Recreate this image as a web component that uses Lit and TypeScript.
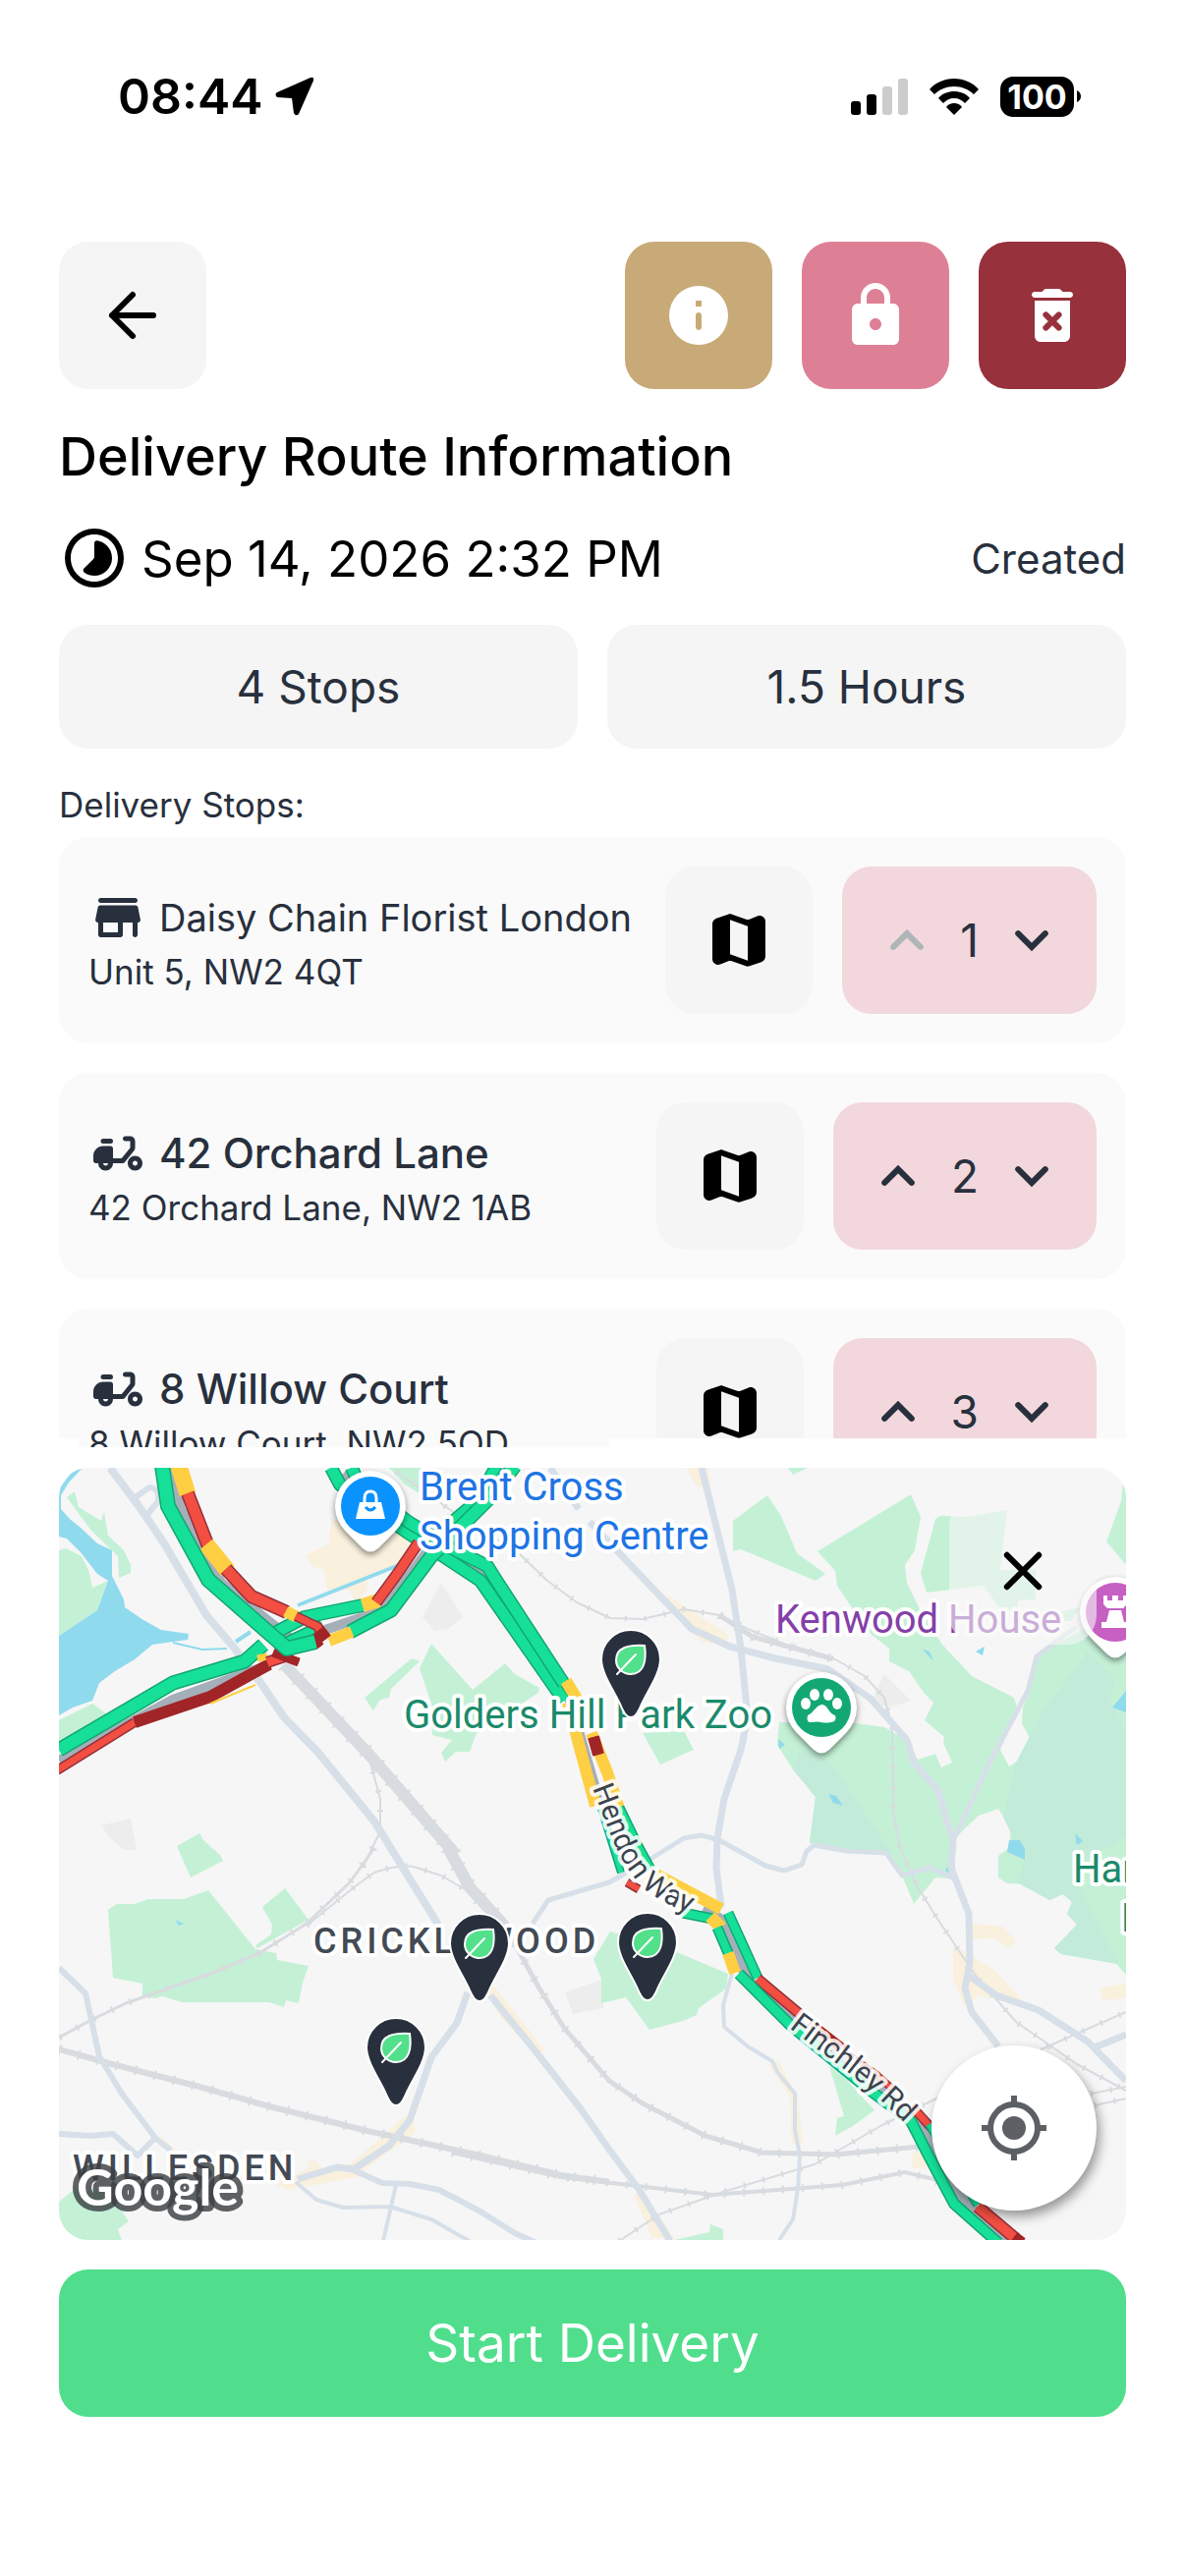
import { LitElement, html, css, svg } from 'lit';
import { customElement, property, state } from 'lit/decorators.js';

interface Stop {
  name: string;
  address: string;
  kind: 'store' | 'scooter';
}

const icons = {
  back: svg`<path d="M19 12H5M12 5l-7 7 7 7" fill="none" stroke="currentColor" stroke-width="2" stroke-linecap="round" stroke-linejoin="round"/>`,
  info: svg`<path d="M12 2a10 10 0 1 0 0 20 10 10 0 0 0 0-20zm0 15c-.55 0-1-.45-1-1v-4c0-.55.45-1 1-1s1 .45 1 1v4c0 .55-.45 1-1 1zm1-8h-2V7h2v2z"/>`,
  lock: svg`<path d="M18 8h-1V6c0-2.76-2.24-5-5-5S7 3.24 7 6v2H6c-1.1 0-2 .9-2 2v10c0 1.1.9 2 2 2h12c1.1 0 2-.9 2-2V10c0-1.1-.9-2-2-2zm-6 9c-1.1 0-2-.9-2-2s.9-2 2-2 2 .9 2 2-.9 2-2 2zM9 8V6c0-1.66 1.34-3 3-3s3 1.34 3 3v2H9z"/>`,
  remove: svg`<path d="M6 7v12c0 1.1.9 2 2 2h8c1.1 0 2-.9 2-2V7H6zM18 4h-2.5l-.71-.71c-.18-.18-.44-.29-.7-.29H9.91c-.26 0-.52.11-.7.29L8.5 4H6c-.55 0-1 .45-1 1s.45 1 1 1h12c.55 0 1-.45 1-1s-.45-1-1-1z"/><path d="M9.8 11.8l4.4 4.4M14.2 11.8l-4.4 4.4" stroke="#97313c" stroke-width="2" stroke-linecap="round"/>`,
  timelapse: svg`<path d="M16.24 7.75A5.97 5.97 0 0 0 13 6.1c-.55-.1-1 .35-1 .9v4.6c0 .26-.1.5-.3.7l-3.2 3.2c-.4.4-.36 1.06.1 1.4 2.34 1.7 5.6 1.4 7.65-.67a5.99 5.99 0 0 0-.01-8.48zM12 2a10 10 0 1 0 0 20 10 10 0 0 0 0-20zm0 18c-4.42 0-8-3.58-8-8s3.58-8 8-8 8 3.58 8 8-3.58 8-8 8z"/>`,
  store: svg`<path d="M5 6h14c.55 0 1-.45 1-1s-.45-1-1-1H5c-.55 0-1 .45-1 1s.45 1 1 1zm15.16 1.8c-.09-.46-.5-.8-.98-.8H4.82c-.48 0-.89.34-.98.8l-1 5c-.12.62.35 1.2.98 1.2H4v5c0 .55.45 1 1 1h8c.55 0 1-.45 1-1v-5h4v5c0 .55.45 1 1 1s1-.45 1-1v-5h.18c.63 0 1.1-.58.98-1.2l-1-5zM12 18H6v-4h6v4z"/>`,
  scooter: svg`<path d="M19 7c0-1.1-.9-2-2-2h-2c-.55 0-1 .45-1 1s.45 1 1 1h2v2.65L13.52 14H10v-4c0-.55-.45-1-1-1H6c-2.21 0-4 1.79-4 4v2c0 .55.45 1 1 1h1c0 1.66 1.34 3 3 3s3-1.34 3-3h4c.3 0 .59-.14.78-.38l3.78-4.72c.28-.35.44-.8.44-1.25V7zM7 17c-.55 0-1-.45-1-1h2c0 .55-.45 1-1 1zM9 6H6a1 1 0 0 0 0 2h3a1 1 0 0 0 0-2zM19 13c-1.66 0-3 1.34-3 3s1.34 3 3 3 3-1.34 3-3-1.34-3-3-3zm0 4c-.55 0-1-.45-1-1s.45-1 1-1 1 .45 1 1-.45 1-1 1z"/>`,
  map: svg`<path d="M14.65 4.98l-5-1.75c-.42-.15-.88-.15-1.3-.01L4.36 4.56C3.55 4.84 3 5.6 3 6.46v11.85c0 1.41 1.41 2.37 2.72 1.86l2.93-1.14c.22-.09.47-.09.69-.01l5 1.75c.42.15.88.15 1.3.01l3.99-1.34c.81-.27 1.36-1.04 1.36-1.9V5.69c0-1.41-1.41-2.37-2.72-1.86l-2.93 1.14c-.22.08-.46.09-.69.01zM15 18.89l-6-2.11V5.11l6 2.11v11.67z"/>`,
  up: svg`<path d="M7.4 14.3L12 9.7l4.6 4.6" fill="none" stroke="currentColor" stroke-width="2" stroke-linecap="round" stroke-linejoin="miter"/>`,
  down: svg`<path d="M7.4 9.7l4.6 4.6 4.6-4.6" fill="none" stroke="currentColor" stroke-width="2" stroke-linecap="round" stroke-linejoin="miter"/>`,
  close: svg`<path d="M6.6 6.6l10.8 10.8M17.4 6.6L6.6 17.4" stroke="currentColor" stroke-width="2" stroke-linecap="round"/>`,
  locate: svg`<circle cx="12" cy="12" r="4"/><circle cx="12" cy="12" r="8" fill="none" stroke="currentColor" stroke-width="2"/><path d="M12 1v3M12 20v3M1 12h3M20 12h3" stroke="currentColor" stroke-width="2"/>`,
};

const icon = (name: keyof typeof icons, size = '') =>
  html`<svg class="icon ${size}" viewBox="0 0 24 24" aria-hidden="true">${icons[name]}</svg>`;

const iconStyles = css`
  .icon {
    display: block;
    flex: none;
    width: 72px;
    height: 72px;
    fill: currentColor;
  }
  .icon.small {
    width: 60px;
    height: 60px;
  }
  button {
    font: inherit;
    color: inherit;
    border: 0;
    padding: 0;
    margin: 0;
    background: none;
    cursor: pointer;
  }
`;

/* Base map shapes, in map units */
const parks = [
  'M8 30L16 24 20 40 43 54 46 45 50 69 66 84 73 99V107L61 112 60 90 36 67 29 59Z',
  'M0 84L7 82 23 90 30 104 34 122 50 115 39 145 0 171Z',
  'M0 257L34 240 48 250 30 262 0 280Z',
  'M379 179L421 226 454 199 464 210 489 224 488 229 425 270 418 289 404 289 393 299 389 290 400 277 380 272 379 240 367 204Z',
  'M359 194L367 197 338 225 336 234 327 236 320 247 311 234Z',
  'M120 385L143 372 147 379 164 394 167 400 134 417Z',
  'M336 0H370V28L352 17Z',
  'M721 28L735 49 751 87 780 108 770 115 694 83 686 85V54Z',
  'M867 27L877 50 871 84 861 99 863 117 876 144 899 180 929 212 972 234 976 247 958 287 967 304 981 295 989 277 980 260 981 244 988 227 995 192 1019 177 1054 158 1086 160V516L1076 505 1020 495 1013 489 1036 465 1026 454 1031 442 1022 434 1008 440 983 424 965 423 956 417V395L967 387 969 367 956 347 936 354 920 369 910 380 913 419 892 417 870 444 858 415 842 392 801 390 769 384 764 380 770 335 747 307 731 282 733 259 811 260 840 264 863 277 874 297 892 291 898 305 909 300 900 280 901 274 881 257 890 239 881 230 865 207 845 197V184L826 169 808 144 792 120 790 105 772 85Z',
  'M897 49L924 50 965 43 958 104 994 103V134L976 135 975 147 990 152 1040 142 1030 156 975 156 960 147 941 120 883 127 877 107 892 52Z',
  'M1083 15L1081 34 1066 75 1086 99V15Z',
  'M742 0H762L747 7Z',
  'M594 270L636 268 646 287 612 302Z',
  'M50 450L59 444 77 444 91 439 127 439 152 430 200 490 221 494 222 501 254 507 248 524 244 545 231 542 229 549 214 544 125 544 105 538 98 540 85 537V525L55 519Z',
  'M230 428L254 460 202 489 200 486 216 475 217 465 207 447Z',
  'M0 747L16 734 50 735 71 767 60 775 64 787H0Z',
  'M544 500L561 472 631 494 681 515 679 530 651 550 649 557 635 563 601 572 577 539 552 545V520Z',
  'M784 609L799 620 830 654 808 670 790 680 792 662 799 660Z',
  'M663 770L676 775V786H626L662 778Z',
];
const woods = [
  'M754 287L783 297 848 392 842 392 764 382 770 335 747 307Z',
  'M1047 187L1075 215 1069 234 1086 267V375L1029 410 1050 450 1079 505 1020 495 1013 489 1036 465 1026 454 1031 442 1022 434 1008 440 975 422 982 400 961 355 974 300 1000 250Z',
];
const waters = [
  'M16 0H24L10 15 2 28V42L12 53 21 60 39 77 54 84V110L66 134 67 142 86 155 104 165 132 169 131 175 116 177 95 180 77 195 57 207 41 219 34 237 14 244 0 252V171L39 145 50 115 39 108 22 86 8 72 0 70V22Z',
  'M879 185L890 197 886 187Z',
  'M933 187L942 182 940 191Z',
  'M1072 244L1086 227V249Z',
  'M783 332L791 334 798 344 788 341Z',
  'M967 379H978L983 388V399L965 391Z',
  'M1034 372L1042 380 1036 384Z',
  'M902 410L907 402V413Z',
  'M732 276L739 282 733 286Z',
  'M118 460L127 464 122 466Z',
];
const plots = [
  'M389 117L411 152 396 164 382 166 370 152Z',
  'M43 364L73 357 79 389 66 389 50 375Z',
  'M515 534L552 521 554 550 523 556Z',
  'M840 210L867 237 845 244 826 239Z',
];
const shops = [
  'M277 52L343 65 359 74 345 99 314 114V124L302 137 296 124H273L270 104 257 100 251 89 275 77Z',
  'M638 0H660L664 18 650 20Z',
  'M620 130L681 170 679 182 654 177 617 140Z',
  'M929 464L961 467 974 482 967 489 951 479 929 480Z',
  'M910 487L947 507 979 540 977 547 936 537 922 549 910 520Z',
  'M337 674L352 659 362 667V677L321 707 303 722 232 735 221 730 255 712 252 706 262 705 270 716 296 709Z',
  'M100 679L121 695 114 700Z',
  'M393 465L494 592 488 600 450 560Z',
  'M722 608L732 604 752 640 757 688H746L744 640Z',
  'M869 697H885L883 714 868 712Z',
  'M1060 529L1086 525V540L1062 542Z',
  'M585 740L592 736 626 784H604Z',
];
const streets: [string, number][] = [
  ['M52 0L82 40 107 77 150 150 179 184 204 217 229 254 264 290 321 360 350 407 386 465', 8],
  ['M75 32L92 20Q100 20 101 28V34L88 50', 6],
  ['M500 0L529 42M540 55L597 115 644 164 683 182 729 194 783 205 826 235 863 277 870 300 894 327 910 380 908 407 926 454 927 504 922 530 929 554 956 589', 7],
  ['M926 517L954 537 997 552 1047 584 1086 624M1086 577L1054 590', 7],
  ['M654 0L670 64 685 124 694 184 701 254 694 287 677 337 670 377 669 407 674 447', 7],
  ['M482 464L498 440 560 422 599 400 636 377 654 374 672 379 719 405 738 410 756 404 761 390 769 384 801 390 842 392 858 415 886 407 913 419', 5],
  ['M1035 162L995 192 986 227 974 250 947 300 910 380', 5],
  ['M685 515L676 547 677 569 701 589 726 604 731 615 749 637V674L754 700 752 734 747 765 733 786', 4],
  ['M0 509L27 535 41 599 64 637 98 682 114 695M0 678L32 680 55 678 80 700 98 682', 6],
  ['M416 534L405 565 379 600 357 664 336 690 300 714 283 712 243 724', 7],
  ['M300 715L329 728 357 729 387 735 429 757 464 779 486 789', 6],
  ['M241 727L262 745 289 753 337 752 379 765 421 789M343 730L330 787', 4],
  ['M439 537L482 590 532 654 560 694 590 734 622 787', 7],
];
const rails: [string, number][] = [
  ['M229 200L314 290 404 394', 12],
  ['M396 387L418 427 454 467', 12],
  ['M454 467L489 530 514 570 560 624 594 647 658 680 715 697 790 699 886 690', 5],
  ['M314 290L327 337V370L309 407', 2],
  ['M321 387L296 422 252 464 204 494 157 514 68 545 29 564 0 580', 3],
  ['M252 466L304 424 321 412Q345 404 361 406L389 415 418 432 436 450', 2],
  ['M0 592L54 607 143 630 214 650 314 675 429 700 511 720 560 727', 6],
  ['M400 697L511 722 597 732 665 740 797 730 861 717 890 724 910 736', 4],
  ['M570 787L611 760 676 737 769 709 836 670 897 640 1004 590 1086 554', 2],
  ['M343 4L400 44 468 87 496 114 527 137 561 153 594 154 636 144 672 150 701 164 740 180 790 195 820 212 840 234 848 264 849 350 856 387 874 427 894 459 933 517 974 564 1036 607 1086 634', 2],
  ['M672 150L706 172 786 194', 5],
  ['M1050 637L1086 630M1054 649L1086 642', 2],
];
const G = ['#16e098', '#11a672'];
const R = ['#f24e42', '#93303a'];
const D = ['#a12527', '#a12527'];
const Y = ['#ffcf43', '#ffcf43'];
const traffic: [string[], string, number][] = [
  [G, 'M277 0L286 17 355 66 382 84 429 115 514 237', 14],
  [G, 'M298 0L306 18 357 56 404 84 436 100 446 116 514 220', 14],
  [G, 'M445 -2L425 34 382 70', 13],
  [G, 'M464 -2L439 30 379 90 338 145 296 167', 15],
  [Y, 'M298 167L275 176', 12],
  [G, 'M220 168L250 152 309 140', 14],
  [Y, 'M309 140L325 135', 14],
  [R, 'M323 137L345 107 366 76', 12],
  [G, 'M230 178L268 160', 11],
  [G, 'M0 287L116 219 189 197 208 180', 15],
  [R, 'M-2 308L77 259', 10],
  [D, 'M77 259L154 233 214 200', 12],
  [Y, 'M154 240L200 221', 2],
  [Y, 'M202 194L212 192', 7],
  [R, 'M212 198L236 190', 12],
  [D, 'M218 188L244 198M258 172L266 182', 9],
  [Y, 'M122 -2L131 27', 17],
  [R, 'M131 26L152 80', 14],
  [Y, 'M150 78L172 105', 17],
  [R, 'M170 103L196 131 232 147', 14],
  [Y, 'M231 146L242 152', 12],
  [R, 'M241 151L264 162 267 174', 10],
  [D, 'M273 166L260 176', 12],
  [G, 'M105 -2L111 39 152 114 232 184 261 177', 16],
  [Y, 'M516 217L527 235', 12],
  [Y, 'M518 239L530 285 546 344', 12],
  [Y, 'M542 270L558 310 570 347', 12],
  [D, 'M544 274L549 292', 12],
  [G, 'M570 346L590 387 602 409', 11],
  [G, 'M552 347L572 412', 8],
  [R, 'M578 422L590 429', 9],
  [Y, 'M608 414L674 449', 12],
  [G, 'M635 453L665 459', 11],
  [Y, 'M663 457L674 468', 13],
  [G, 'M670 468L682 496', 11],
  [Y, 'M681 494L688 514', 12],
  [G, 'M681 453L711 519', 11],
  [R, 'M711 520L754 556', 11],
  [D, 'M764 565L800 593', 10],
  [D, 'M804 597L834 618', 6],
  [R, 'M832 618L848 632', 8],
  [R, 'M868 650L888 672', 10],
  [G, 'M886 668L935 750', 10],
  [R, 'M935 752L974 785', 13],
  [D, 'M972 783L980 789', 12],
  [G, 'M692 515L744 567 826 634 867 665 885 700 911 749 956 789', 12],
];
const medians =
  'M115 0L124 42 165 117 238 176M290 5L370 67 434 107 520 237 550 340M455 0L432 32 380 78 330 145 250 172 232 182M0 298L116 236 210 202M655 450L672 458 700 520 745 560 830 624 880 675 920 745 968 789';

const mapPins = [
  [582, 253],
  [428, 542],
  [343, 648],
  [599, 541],
];

const poi = (x: number, y: number, color: string, glyph: unknown) => svg`
  <g transform="translate(${x} ${y})" class="poi">
    <path d="M-25 26L-8 43Q0 50 8 43L25 26A36 36 0 1 0 -25 26Z" fill="#fff"/>
    <circle r="30" fill=${color}/>
    ${glyph}
  </g>
`;

@customElement('route-map')
export class RouteMap extends LitElement {
  static styles = [
    iconStyles,
    css`
      :host {
        display: block;
        position: relative;
        overflow: hidden;
        border-radius: 30px;
        background: #f6f6f6;
        aspect-ratio: 181 / 131;
        font-family: Roboto, 'Liberation Sans', sans-serif;
      }
      .canvas {
        display: block;
        width: 100%;
        height: 100%;
      }
      .line {
        fill: none;
        stroke-linejoin: round;
      }
      .poi {
        filter: drop-shadow(0 3px 3px rgba(0, 0, 0, 0.45));
      }
      .label {
        font-size: 40px;
        paint-order: stroke;
        stroke: #fff;
        stroke-width: 8px;
        stroke-linejoin: round;
      }
      .area {
        font-size: 36px;
        letter-spacing: 4px;
        font-weight: 500;
        fill: #434a54;
      }
      .street {
        font-size: 30px;
        fill: #3c434e;
        stroke: rgba(255, 255, 255, 0.85);
      }
      .shop {
        fill: #1e74e4;
      }
      .zoo {
        fill: #1b8a6b;
      }
      .house {
        fill: #8440a8;
      }
      .brand {
        font-family: Lato, 'Open Sans', sans-serif;
        font-size: 52px;
        font-weight: 700;
        fill: #fff;
        paint-order: stroke;
        stroke: rgba(60, 64, 67, 0.82);
        stroke-width: 12px;
        stroke-linejoin: round;
      }
      .close,
      .locate {
        position: absolute;
        right: 30px;
        display: grid;
        place-items: center;
      }
      .close {
        top: 30px;
        width: 150px;
        height: 150px;
        border-radius: 30px;
        background: rgba(246, 246, 246, 0.6);
        color: #000;
      }
      .locate {
        bottom: 30px;
        width: 168px;
        height: 168px;
        border-radius: 50%;
        background: #fff;
        color: #5c5f64;
        box-shadow: 3px 6px 12px rgba(0, 0, 0, 0.4);
      }
    `,
  ];

  render() {
    return html`
      <svg class="canvas" viewBox="0 0 1086 786" preserveAspectRatio="xMidYMid slice" role="img" aria-label="Route map">
        ${shops.map((d) => svg`<path d=${d} fill="#f9f0de"/>`)}
        ${plots.map((d) => svg`<path d=${d} fill="#ecedec"/>`)}
        ${parks.map((d) => svg`<path d=${d} fill="#c4f1d6"/>`)}
        ${woods.map((d) => svg`<path d=${d} fill="#c2ebd9"/>`)}
        ${waters.map((d) => svg`<path d=${d} fill="#90daee"/>`)}
        <path class="line" stroke="#90daee" stroke-width="4" d="M180 177L195 167M243 140L346 99" />
        <path class="line" stroke="#90daee" stroke-width="2" d="M116 178L146 185 171 184" />
        ${rails.map(([d, w]) => svg`<path class="line" stroke="#d8dbdf" stroke-width=${w} d=${d}/>`)}
        ${rails.map(([d, w]) => svg`<path class="line" stroke="#d8dbdf" stroke-width=${w + 4} stroke-dasharray="2 18" d=${d}/>`)}
        ${streets.map(([d, w]) => svg`<path class="line" stroke="#d7e0e8" stroke-width=${w} d=${d}/>`)}
        <path class="line" stroke="#a5afb9" stroke-width="10" d=${medians} />
        ${traffic.map(
          ([c, d, w]) => svg`
            <path class="line" stroke=${c[1]} stroke-width=${w} d=${d}/>
            <path class="line" stroke=${c[0]} stroke-width=${w - 3} d=${d}/>
          `
        )}

        ${poi(
          317,
          39,
          '#0a93ff',
          svg`<path d="M-11 -4H11L15 13H-15Z" fill="#fff"/><path d="M-6 -3V-8Q-6 -15 0 -15T6 -8V-3" fill="none" stroke="#fff" stroke-width="3"/><path d="M-5 1Q0 7 5 1" fill="none" stroke="#0a93ff" stroke-width="3"/>`
        )}
        ${poi(
          776,
          244,
          '#13a873',
          svg`<g fill="#fff"><ellipse cx="-16" cy="-4" rx="5" ry="6"/><ellipse cx="-7" cy="-13" rx="5" ry="6"/><ellipse cx="7" cy="-13" rx="5" ry="6"/><ellipse cx="16" cy="-4" rx="5" ry="6"/><path d="M0 -3Q4 -3 7 2T14 8Q16 14 10 15T0 15T-10 15T-14 8Q-10 6 -7 2T0 -3Z"/></g>`
        )}
        ${poi(
          1075,
          147,
          '#c660c2',
          svg`<path d="M-12 -17H-8V-12H-3V-17H3V-12H8V-17H12V-8L8 -4H-8L-12 -8ZM-6 -2H6L9 10H14V16H-14V10H-9Z" fill="#fff"/>`
        )}

        <text class="label shop" x="367" y="33">Brent Cross</text>
        <text class="label shop" x="367" y="83">Shopping Centre</text>
        <text class="label zoo" x="351" y="265">Golders Hill Park Zoo</text>
        <text class="label house" x="729" y="168">Kenwood House</text>
        <text class="label zoo" x="1032" y="422">Ham</text>
        <text class="label zoo" x="1081" y="472">H</text>
        <text class="label area" x="259" y="494">CRICKLEWOOD</text>
        <text class="label area" x="14" y="725">WILLESDEN</text>
        <path id="hendon" fill="none" d="M543 326L560 370Q576 410 595 428Q614 444 662 462" />
        <path id="finchley" fill="none" d="M743 570L800 613Q830 636 872 678" />
        <text class="label street"><textPath href="#hendon">Hendon Way</textPath></text>
        <text class="label street"><textPath href="#finchley">Finchley Rd</textPath></text>
        <text class="brand" x="18" y="751">Google</text>

        ${mapPins.map(
          ([x, y]) => svg`
            <g transform="translate(${x} ${y})">
              <path d="M0 1C-4 1 -6 -2 -9 -8C-14 -22 -30 -42 -30 -58A30 30 0 0 1 30 -58C30 -42 14 -22 9 -8C6 -2 4 1 0 1Z" fill="#28303d" stroke="#fff" stroke-width="2"/>
              <path d="M14 -72C16 -58 14 -43 0 -43C-9 -43 -15 -50 -15 -57C-15 -70 -3 -73 14 -72Z" fill="#53e08b" stroke="#fff" stroke-width="2"/>
              <path d="M-14 -43L5 -63" stroke="#fff" stroke-width="2" stroke-linecap="round"/>
            </g>
          `
        )}
      </svg>
      <button class="close" aria-label="Close map">${icon('close')}</button>
      <button class="locate" aria-label="My location">${icon('locate')}</button>
    `;
  }
}

@customElement('stop-card')
export class StopCard extends LitElement {
  @property({ attribute: false }) stop!: Stop;
  @property({ type: Number }) position = 1;
  @property({ type: Boolean }) first = false;

  static styles = [
    iconStyles,
    css`
      :host {
        display: flex;
        align-items: center;
        gap: 30px;
        padding: 30px;
        border-radius: 30px;
        background: #fafafa;
      }
      .text {
        flex: 1;
        min-width: 0;
        padding-top: 4px;
        white-space: nowrap;
      }
      .name {
        display: flex;
        align-items: center;
        gap: 12px;
        font-size: 42px;
        font-weight: 500;
        line-height: 60px;
      }
      .name.store {
        font-size: 38px;
        font-weight: 400;
      }
      .address {
        font-size: 35px;
        line-height: 50px;
      }
      .open-map {
        display: grid;
        place-items: center;
        flex: none;
        width: 150px;
        height: 150px;
        border-radius: 30px;
        background: #f5f5f5;
        color: #000;
      }
      .stepper {
        display: flex;
        align-items: center;
        flex: none;
        gap: 18px;
        height: 150px;
        padding: 0 30px;
        border-radius: 30px;
        background: #f2d7dc;
        font-size: 46px;
      }
      button:disabled {
        color: #aeb5b6;
      }
    `,
  ];

  private move(by: number) {
    this.dispatchEvent(new CustomEvent('move', { detail: by }));
  }

  render() {
    const { name, address, kind } = this.stop;
    return html`
      <div class="text">
        <div class="name ${kind}">${icon(kind, 'small')}<span>${name}</span></div>
        <div class="address">${address}</div>
      </div>
      <button class="open-map" aria-label="Show on map">${icon('map')}</button>
      <div class="stepper">
        <button aria-label="Move up" ?disabled=${this.first} @click=${() => this.move(-1)}>${icon('up')}</button>
        <span>${this.position}</span>
        <button aria-label="Move down" @click=${() => this.move(1)}>${icon('down')}</button>
      </div>
    `;
  }
}

@customElement('app-root')
export class AppRoot extends LitElement {
  @state() private stops: Stop[] = [
    { name: 'Daisy Chain Florist London', address: 'Unit 5, NW2 4QT', kind: 'store' },
    { name: '42 Orchard Lane', address: '42 Orchard Lane, NW2 1AB', kind: 'scooter' },
    { name: '8 Willow Court', address: '8 Willow Court, NW2 5QD', kind: 'scooter' },
  ];

  static styles = [
    iconStyles,
    css`
      :host {
        display: flex;
        flex-direction: column;
        box-sizing: border-box;
        height: 100vh;
        padding-bottom: 162px;
        background: #fff;
        color: #28303d;
        font-family: Inter, 'Open Sans', sans-serif;
      }
      .status {
        display: flex;
        align-items: center;
        gap: 12px;
        height: 56px;
        padding: 70px 106px 120px 120px;
        color: #000;
      }
      .time {
        font-size: 50px;
        font-weight: 600;
      }
      .status svg {
        display: block;
      }
      .time-group {
        display: flex;
        align-items: center;
        gap: 12px;
        margin-right: auto;
      }
      .battery {
        display: flex;
        align-items: center;
        gap: 3px;
        margin-left: 10px;
      }
      .level {
        width: 75px;
        border-radius: 13px;
        background: #000;
        color: #fff;
        font-size: 34px;
        font-weight: 700;
        line-height: 41px;
        text-align: center;
      }
      .wifi {
        margin-left: 10px;
      }
      main {
        display: flex;
        flex-direction: column;
        flex: 1;
        min-height: 0;
        padding: 0 60px;
      }
      .toolbar {
        display: flex;
        gap: 30px;
      }
      .tool {
        display: grid;
        place-items: center;
        width: 150px;
        height: 150px;
        border-radius: 30px;
        color: #fff;
      }
      .tool.back {
        margin-right: auto;
        background: #f5f5f5;
        color: #000;
      }
      .tool.info {
        background: #c8aa78;
      }
      .tool.lock {
        background: #dd8096;
      }
      .tool.remove {
        background: #97313c;
      }
      h1 {
        margin: 32px 0 28px;
        color: #000;
        font-size: 54px;
        font-weight: 500;
        line-height: 74px;
      }
      .when {
        display: flex;
        align-items: center;
        gap: 12px;
        height: 76px;
        color: #000;
        font-size: 51px;
      }
      .state {
        margin-left: auto;
        color: #28303d;
        font-size: 42px;
      }
      .stats {
        display: grid;
        grid-template-columns: 1fr 1fr;
        gap: 30px;
        margin: 30px 0;
      }
      .stat {
        border-radius: 30px;
        background: #f5f5f5;
        font-size: 46px;
        line-height: 126px;
        text-align: center;
      }
      h2 {
        margin: 2px 0 8px;
        font-size: 35px;
        font-weight: 400;
        line-height: 50px;
      }
      .stops {
        display: flex;
        flex-direction: column;
        gap: 30px;
        flex: 1;
        min-height: 0;
        overflow: hidden;
        margin-bottom: 21px;
        clip-path: polygon(0 0, 100% 0, 100% calc(100% - 9px), 560px calc(100% - 9px), 560px 100%, 20px 100%, 20px calc(100% - 9px), 0 calc(100% - 9px));
      }
      .stats + h2 {
        margin-top: 0;
        padding-top: 2px;
      }
      stop-card {
        flex: none;
      }
      route-map {
        flex: none;
      }
      .start {
        flex: none;
        margin-top: 30px;
        height: 150px;
        border-radius: 30px;
        background: #50de8d;
        color: #fff;
        font-size: 53px;
      }
    `,
  ];

  private moveStop(index: number, by: number) {
    const target = index + by;
    if (target < 0 || target >= this.stops.length) return;
    const stops = [...this.stops];
    [stops[index], stops[target]] = [stops[target], stops[index]];
    this.stops = stops;
  }

  render() {
    return html`
      <div class="status">
        <div class="time-group">
          <span class="time">08:44</span>
          <svg width="40" height="40" viewBox="0 0 40 40" aria-hidden="true">
            <path d="M36 1L2 16Q-1 18 2 21L17 22 19 37Q21 41 24 38L39 4Q40 0 36 1Z" />
          </svg>
        </div>
        <svg width="58" height="37" viewBox="0 0 58 37" aria-hidden="true">
          <rect y="23" width="10" height="14" rx="3" />
          <rect x="16" y="16" width="10" height="21" rx="3" />
          <rect x="32" y="8" width="10" height="29" rx="3" fill="#ccc" />
          <rect x="48" width="10" height="37" rx="3" fill="#ccc" />
        </svg>
        <svg class="wifi" width="50" height="37" viewBox="0 0 50 37" aria-hidden="true">
          <path d="M25 0C15 0 6 4 0 11L5 16C10 11 17 8 25 8S40 11 45 16L50 11C44 4 35 0 25 0Z" />
          <path d="M25 13C19 13 13 15 9 20L14 25C17 22 20 20 25 20S33 22 36 25L41 20C37 15 31 13 25 13Z" />
          <path d="M25 25C22 25 19 26 17 29L25 37 33 29C31 26 28 25 25 25Z" />
        </svg>
        <div class="battery">
          <div class="level">100</div>
          <svg width="4" height="12" viewBox="0 0 4 12" aria-hidden="true"><path d="M0 0Q4 2 4 6T0 12Z" /></svg>
        </div>
      </div>
      <main>
        <div class="toolbar">
          <button class="tool back" aria-label="Back">${icon('back')}</button>
          <button class="tool info" aria-label="Info">${icon('info')}</button>
          <button class="tool lock" aria-label="Lock">${icon('lock')}</button>
          <button class="tool remove" aria-label="Delete">${icon('remove')}</button>
        </div>
        <h1>Delivery Route Information</h1>
        <div class="when">
          ${icon('timelapse')}
          <span>Sep 14, 2026 2:32 PM</span>
          <span class="state">Created</span>
        </div>
        <div class="stats">
          <div class="stat">4 Stops</div>
          <div class="stat">1.5 Hours</div>
        </div>
        <h2>Delivery Stops:</h2>
        <div class="stops">
          ${this.stops.map(
            (stop, i) => html`
              <stop-card
                .stop=${stop}
                .position=${i + 1}
                ?first=${i === 0}
                @move=${(e: CustomEvent<number>) => this.moveStop(i, e.detail)}
              ></stop-card>
            `
          )}
        </div>
        <route-map></route-map>
        <button class="start">Start Delivery</button>
      </main>
    `;
  }
}
